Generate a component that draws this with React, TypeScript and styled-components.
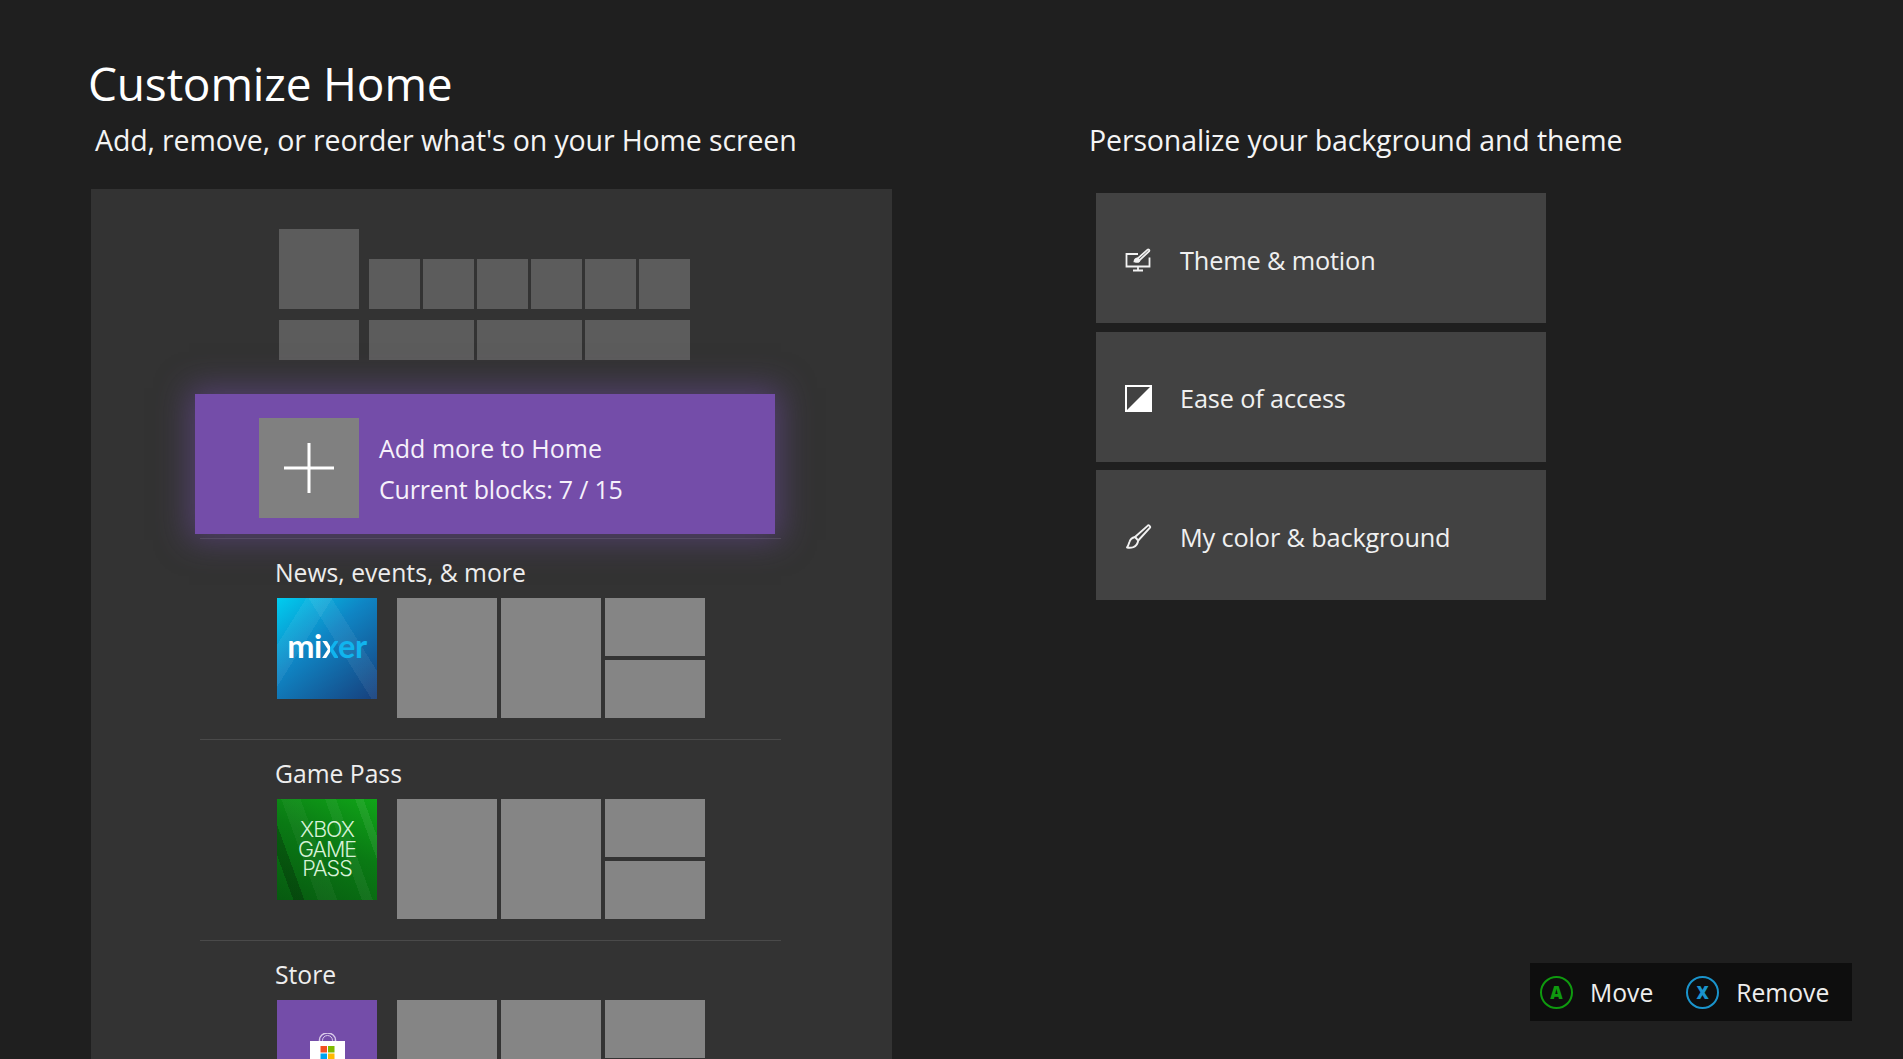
import styled, { createGlobalStyle } from 'styled-components';

const GlobalStyle = createGlobalStyle`
  html, body { margin: 0; padding: 0; background: #1f1f1f; }
  body { font-family: "Open Sans", "Noto Sans", sans-serif; color: #fff; }
`;

const SECTIONS = [
  { label: 'News, events, & more', kind: 'mixer' },
  { label: 'Game Pass', kind: 'pass' },
  { label: 'Store', kind: 'store' },
] as const;

const OPTIONS = [
  { label: 'Theme & motion', icon: 'theme' },
  { label: 'Ease of access', icon: 'contrast' },
  { label: 'My color & background', icon: 'brush' },
] as const;

function ThemeIcon() {
  return (
    <svg viewBox="0 0 27 24" width="27" height="24" fill="none" stroke="#f2f2f2" strokeWidth="1.8">
      <path d="M13 6H1.500v12.500h23V9.500" />
      <path d="M13 18.500v3.500M8 22.500h10" />
      <path d="M9.500 13.500c.3-2 1.600-3 3.200-3l1.800 1.700c0 1.600-1.600 2.300-5 1.300z" fill="#f2f2f2" />
      <path d="M12.800 10.400 22.600 1.600c.8-.6 2.200.6 1.600 1.500l-9.600 9.100" />
    </svg>
  );
}

function ContrastIcon() {
  return (
    <svg viewBox="0 0 27 27" width="27" height="27">
      <rect x="1" y="1" width="25" height="25" fill="none" stroke="#fff" strokeWidth="2" />
      <path d="M26 1v25H1z" fill="#fff" />
    </svg>
  );
}

function BrushIcon() {
  return (
    <svg viewBox="0 0 27 25" width="27" height="25" fill="none" stroke="#f2f2f2" strokeWidth="1.9" strokeLinejoin="round">
      <path d="M10 13 22.800 1.600c1-.8 3 .8 2.200 2L13.200 16.500" />
      <path d="M10 13l3.200 3.500c-.5 3.500-2.400 5.800-4.800 6.700-2 .6-4.900.6-6.400.3 1.300-1.400 1.700-3.300 2.400-5.500.8-2.800 2.800-4.300 5.600-5z" />
    </svg>
  );
}

function BagIcon() {
  return (
    <svg viewBox="0 0 35 40" width="35" height="40">
      <path d="M9.500 10V7a8 7 0 0 1 16 0v3" fill="none" stroke="#d9cbea" strokeWidth="1.500" />
      <path d="M12.500 10V7.500a5 5 0 0 1 10 0V10" fill="none" stroke="#d9cbea" strokeWidth="1" />
      <rect x="0" y="8" width="35" height="32" fill="#fff" />
      <rect x="10.500" y="13" width="6.500" height="6.500" fill="#f25022" />
      <rect x="18" y="13" width="6.500" height="6.500" fill="#7fba00" />
      <rect x="10.500" y="20.500" width="6.500" height="6.500" fill="#00a4ef" />
      <rect x="18" y="20.500" width="6.500" height="6.500" fill="#ffb900" />
    </svg>
  );
}

function AppArt({ kind }: { kind: 'mixer' | 'pass' | 'store' }) {
  if (kind === 'mixer') {
    return (
      <MixerTile>
        <MixerWord>mi<MixerX>x</MixerX><MixerEnd>er</MixerEnd></MixerWord>
      </MixerTile>
    );
  }
  if (kind === 'pass') {
    return <PassTile><PassWord>XBOX<br />GAME<br />PASS</PassWord></PassTile>;
  }
  return <StoreTile><BagIcon /></StoreTile>;
}

export default function App() {
  return (
    <Page>
      <GlobalStyle />
      <Title>Customize Home</Title>
      <Columns>
        <div>
          <LeftHeading>Add, remove, or reorder what's on your Home screen</LeftHeading>
          <Panel>
            <MapRow $bottom>
              <MapBig />
              <MapCells>
                {[0, 1, 2, 3, 4, 5].map(i => <MapSmall key={i} />)}
              </MapCells>
            </MapRow>
            <MapRow>
              <MapWide />
              <MapCells>
                {[0, 1, 2].map(i => <MapCell key={i} />)}
              </MapCells>
            </MapRow>

            <AddCard>
              <PlusTile>
                <svg viewBox="0 0 50 50" width="50" height="50" fill="#fff">
                  <rect x="23.500" y="0" width="3" height="50" />
                  <rect x="0" y="23.500" width="50" height="3" />
                </svg>
              </PlusTile>
              <AddText>
                <div>Add more to Home</div>
                <BlockCount>Current blocks: 7 / 15</BlockCount>
              </AddText>
            </AddCard>

            {SECTIONS.map(section => (
              <Section key={section.label}>
                <SectionLabel>{section.label}</SectionLabel>
                <SectionRow>
                  <AppArt kind={section.kind} />
                  <TallTile />
                  <TallTile />
                  <TileStack>
                    <HalfTile />
                    <HalfTile />
                  </TileStack>
                </SectionRow>
              </Section>
            ))}
          </Panel>
        </div>

        <div>
          <RightHeading>Personalize your background and theme</RightHeading>
          <OptionList>
            {OPTIONS.map(option => (
              <Option key={option.label}>
                <OptionIcon>
                  {option.icon === 'theme' && <ThemeIcon />}
                  {option.icon === 'contrast' && <ContrastIcon />}
                  {option.icon === 'brush' && <BrushIcon />}
                </OptionIcon>
                <OptionLabel>{option.label}</OptionLabel>
              </Option>
            ))}
          </OptionList>
        </div>
      </Columns>

      <Legend>
        <PadButton $color="#0f9a0f">A</PadButton>
        <LegendText>Move</LegendText>
        <PadButton $color="#1a94cc" $gap>X</PadButton>
        <LegendText>Remove</LegendText>
      </Legend>
    </Page>
  );
}

const Page = styled.div`
  position: relative;
  width: 1903px;
  height: 1059px;
  overflow: hidden;
  background: #1f1f1f;
  padding: 51px 0 0 91px;
  box-sizing: border-box;
`;

const Title = styled.h1`
  margin: 0 0 0 -3px;
  font-size: 46px;
  font-weight: 400;
  line-height: 64px;
  letter-spacing: -0.16px;
`;

const Columns = styled.div`
  display: grid;
  grid-template-columns: 801px 1fr;
  column-gap: 197px;
  margin-top: 7px;
`;

const LeftHeading = styled.div`
  margin-left: 4px;
  height: 67px;
  font-size: 28.500px;
  line-height: 37px;
  letter-spacing: -0.13px;
  color: #f4f4f4;
  white-space: nowrap;
`;

const RightHeading = styled(LeftHeading)`
  margin-left: 0;
  height: 71px;
`;

const Panel = styled.div`
  height: 870px;
  background: #333333;
  padding-top: 40px;
  box-sizing: border-box;
  overflow: hidden;
`;

const MapRow = styled.div<{ $bottom?: boolean }>`
  display: flex;
  align-items: flex-end;
  gap: 10px;
  margin-left: 188px;
  margin-bottom: ${({ $bottom }) => ($bottom ? '11px' : '0')};
`;

const MapCells = styled.div`
  display: flex;
  gap: 3.500px;
  width: 321px;
`;

const MapBig = styled.div`
  width: 80px;
  height: 80px;
  background: #5c5c5c;
`;

const MapSmall = styled.div`
  flex: 1;
  height: 50px;
  background: #5c5c5c;
`;

const MapWide = styled.div`
  width: 80px;
  height: 40px;
  background: #5c5c5c;
`;

const MapCell = styled(MapWide)`
  flex: 1;
`;

const AddCard = styled.div`
  display: flex;
  align-items: flex-start;
  position: relative;
  z-index: 1;
  width: 580px;
  height: 140px;
  margin: 34px 0 0 104px;
  padding: 24px 0 0 64px;
  box-sizing: border-box;
  background: #744da9;
  box-shadow: 0 0 30px 6px rgba(116, 77, 169, 0.5);
`;

const PlusTile = styled.div`
  display: flex;
  align-items: center;
  justify-content: center;
  width: 100px;
  height: 100px;
  background: #808080;
`;

const AddText = styled.div`
  margin: 10px 0 0 20px;
  font-size: 25px;
  line-height: 41px;
  color: #f6f1fb;
`;

const BlockCount = styled.div`
  letter-spacing: -0.2px;
`;

const Section = styled.section`
  margin: 4px 0 0 109px;
  width: 581px;
  & + & { margin-top: 21px; }
  border-top: 1px solid #4a4a4a;
`;

const SectionLabel = styled.div`
  height: 59px;
  margin-left: 75px;
  padding-top: 16px;
  box-sizing: border-box;
  font-size: 24.700px;
  line-height: 36px;
  color: #eeeeee;
  white-space: nowrap;
`;

const SectionRow = styled.div`
  display: flex;
  align-items: flex-start;
  gap: 4px;
  margin-left: 77px;
`;

const AppTile = styled.div`
  width: 100px;
  height: 101px;
  margin-right: 16px;
  flex-shrink: 0;
`;

const MixerTile = styled(AppTile)`
  display: flex;
  align-items: center;
  justify-content: center;
  padding-bottom: 4px;
  box-sizing: border-box;
  background:
    linear-gradient(58deg, transparent 58%, rgba(255, 255, 255, 0.06) 58% 72%, transparent 72%),
    linear-gradient(122deg, transparent 18%, rgba(255, 255, 255, 0.06) 18% 34%, transparent 34%),
    linear-gradient(140deg, #00cdf0 0%, #0f85c4 42%, #173f7c 100%);
`;

const MixerWord = styled.span`
  font-family: "Lato", "Open Sans", sans-serif;
  font-size: 32.500px;
  font-weight: 700;
  line-height: 1;
  letter-spacing: -0.3px;
  color: #ffffff;
`;

const MixerX = styled.span`
  background: linear-gradient(90deg, #ffffff 0 50%, #11b4ee 50% 100%);
  -webkit-background-clip: text;
  background-clip: text;
  color: transparent;
`;

const MixerEnd = styled.span`
  color: #11b4ee;
`;

const PassTile = styled(AppTile)`
  display: flex;
  align-items: center;
  justify-content: center;
  background:
    linear-gradient(70deg, transparent 12%, rgba(0, 0, 0, 0.22) 12% 20%, transparent 20% 62%, rgba(255, 255, 255, 0.05) 62% 70%, transparent 70% 84%, rgba(255, 255, 255, 0.07) 84% 90%, transparent 90%),
    linear-gradient(70deg, transparent 30%, rgba(255, 255, 255, 0.04) 30% 44%, transparent 44%),
    linear-gradient(205deg, #10a518 0%, #0a7a14 45%, #075a10 100%);
`;

const PassWord = styled.span`
  font-family: "Inter", "Liberation Sans", sans-serif;
  font-size: 21.500px;
  font-weight: 300;
  line-height: 19.500px;
  text-align: center;
  letter-spacing: -1px;
  color: #d8f2d8;
`;

const StoreTile = styled(AppTile)`
  display: flex;
  justify-content: center;
  padding-top: 33px;
  box-sizing: border-box;
  background: #744da9;
  overflow: hidden;
  svg { flex-shrink: 0; }
`;

const TallTile = styled.div`
  width: 100px;
  height: 120px;
  background: #858585;
`;

const TileStack = styled.div`
  display: flex;
  flex-direction: column;
  gap: 4px;
  width: 100px;
`;

const HalfTile = styled.div`
  height: 58px;
  background: #858585;
`;

const OptionList = styled.div`
  display: flex;
  flex-direction: column;
  gap: 8.500px;
  margin-left: 7px;
  width: 450px;
`;

const Option = styled.div`
  display: flex;
  align-items: center;
  gap: 28px;
  height: 130px;
  padding-left: 29px;
  padding-top: 3px;
  box-sizing: border-box;
  background: #424242;
`;

const OptionIcon = styled.span`
  display: flex;
  width: 27px;
  justify-content: center;
`;

const OptionLabel = styled.span`
  font-size: 25.300px;
  letter-spacing: -0.15px;
  color: #f0f0f0;
`;

const Legend = styled.div`
  position: absolute;
  left: 1530px;
  top: 963px;
  display: flex;
  align-items: center;
  width: 322px;
  height: 58px;
  padding-left: 10px;
  box-sizing: border-box;
  background: #0e0e0e;
`;

const PadButton = styled.span<{ $color: string; $gap?: boolean }>`
  display: flex;
  align-items: center;
  justify-content: center;
  width: 33px;
  height: 33px;
  margin: 0 17px 0 ${({ $gap }) => ($gap ? '33px' : '0')};
  border: 2.500px solid ${({ $color }) => $color};
  border-radius: 50%;
  box-sizing: border-box;
  font-size: 17px;
  font-weight: 800;
  color: ${({ $color }) => $color};
`;

const LegendText = styled.span`
  font-size: 24.700px;
  color: #eeeeee;
`;
